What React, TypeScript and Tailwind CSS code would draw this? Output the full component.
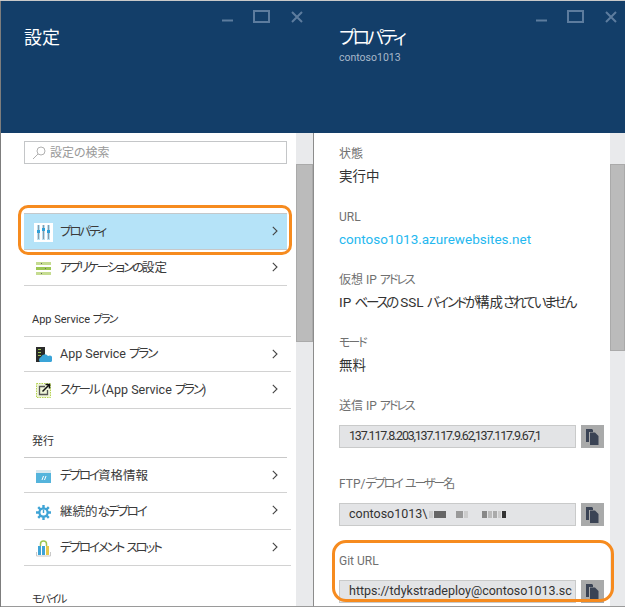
import React from "react";

function T({ s }: { s: string }) {
  const parts = s.split(/([ぁ-んァ-ヶー]+)/);
  return (
    <>
      {parts.map((p, i) =>
        i % 2 === 1 ? (
          <span key={i} className="tracking-[-0.17em]">{p}</span>
        ) : (
          <span key={i}>{p}</span>
        )
      )}
    </>
  );
}

function WinControls() {
  return (
    <div className="flex items-start pt-[9px]">
      <svg width="81" height="16" viewBox="0 0 81 16" fill="none" stroke="#5d7c9e">
        <path d="M0 10.5H11" strokeWidth="2" />
        <rect x="32" y="1" width="15" height="11" strokeWidth="2" />
        <path d="M70 2L80 12M80 2L70 12" strokeWidth="2" />
      </svg>
    </div>
  );
}

function Chevron() {
  return (
    <svg width="6" height="10" viewBox="0 0 6 10" fill="none" stroke="#444" strokeWidth="1.1">
      <path d="M0.8 0.8L5 5L0.8 9.2" />
    </svg>
  );
}

function PropIcon() {
  return (
    <svg width="19" height="19" viewBox="0 0 19 19">
      <rect width="19" height="19" fill="#fff" />
      {[3, 8, 13].map((x, i) => (
        <g key={x}>
          <rect x={x} y="2" width="3" height="15" fill="#b7dff0" />
          <rect x={x + 1} y="2" width="1" height="14" fill="#8a9aa8" />
          <rect x={x} y={[7, 5, 7][i]} width="3" height="3" fill="#2fa0d8" />
        </g>
      ))}
    </svg>
  );
}

function SettingsIcon() {
  return (
    <svg width="15" height="13" viewBox="0 0 15 13">
      <rect y="0" width="15" height="3" fill="#c5dc90" />
      <rect y="5" width="15" height="3" fill="#9cc653" />
      <rect y="10" width="15" height="3" fill="#c5dc90" />
      <rect x="5" y="1" width="1" height="1" fill="#666" />
      <rect x="9" y="6" width="1" height="1" fill="#666" />
      <rect x="5" y="11" width="1" height="1" fill="#666" />
    </svg>
  );
}

function PlanIcon() {
  return (
    <svg width="16" height="16" viewBox="0 0 16 16">
      <rect x="0" y="0" width="9" height="15" fill="#2b2b2b" />
      <rect x="2" y="2" width="3" height="1" fill="#9cc653" />
      <rect x="2" y="5" width="3" height="1" fill="#9cc653" />
      <rect x="2" y="8" width="3" height="1" fill="#9cc653" />
      <path d="M4 15a3 3 0 0 1 1-5 4 4 0 0 1 7-1 3 3 0 0 1 3 6z" fill="#3aa4d8" />
    </svg>
  );
}

function ScaleIcon() {
  return (
    <svg width="15" height="15" viewBox="0 0 15 15" fill="none">
      <rect x="0.5" y="0.5" width="14" height="14" stroke="#b5d34f" strokeDasharray="1.5 1" fill="#eef4d8" />
      <path d="M9 3.5H3.5V11.5H11.5V7" stroke="#555" strokeWidth="1.3" />
      <path d="M6.5 8.5L13 2M9.5 1.5H13.5V5.5" stroke="#111" strokeWidth="1.5" />
    </svg>
  );
}

function CredIcon() {
  return (
    <svg width="15" height="13" viewBox="0 0 15 13">
      <rect width="15" height="13" fill="#55b4dc" />
      <rect x="0" y="0" width="15" height="3" fill="#d8e8ef" />
      <path d="M6 10L7.5 6M8.5 10L10 6" stroke="#fff" strokeWidth="1" />
    </svg>
  );
}

function GearIcon() {
  return (
    <svg width="15" height="15" viewBox="0 0 15 15" fill="none">
      <path d="M7.5 0V15M0 7.5H15M2.2 2.2L12.8 12.8M12.8 2.2L2.2 12.8" stroke="#3fa4d6" strokeWidth="2.4" />
      <circle cx="7.5" cy="7.5" r="5.2" fill="#3fa4d6" />
      <circle cx="7.5" cy="7.5" r="3" fill="#fff" />
      <path d="M7.5 4.5V8" stroke="#3fa4d6" strokeWidth="1.4" />
    </svg>
  );
}

function SlotIcon() {
  return (
    <svg width="15" height="17" viewBox="0 0 15 17" fill="none">
      <path d="M4.5 6V4a3 3 0 0 1 6 0v2" stroke="#9cc653" strokeWidth="1.5" />
      <rect x="2" y="6" width="3" height="9" fill="#3fa4d6" />
      <rect x="6" y="6" width="3" height="9" fill="#3fa4d6" />
      <rect x="10" y="6" width="3" height="9" fill="#e5c84a" />
      <path d="M0.5 12V16H14.5V12" stroke="#c9c9c9" />
    </svg>
  );
}

function CopyIcon() {
  return (
    <div className="w-[23px] h-[23px] bg-[#a9aaaa] flex items-center justify-center shrink-0">
      <svg width="13" height="16" viewBox="0 0 13 16">
        <path d="M0 0H6L7 1V3H3V13H0Z" fill="#3a4354" />
        <path d="M4 3.5H9L12.5 7V16H4Z" fill="#3a4354" />
      </svg>
    </div>
  );
}

function Row({ icon, label, active, wide, h = "h-[35px]", pt = "pt-[1px]" }: { icon: React.ReactNode; label: string; active?: boolean; wide?: boolean; h?: string; pt?: string }) {
  return (
    <div className={`${h} ${pt} flex items-center relative ${active ? "bg-[#b5e3f8] w-[263px] border-t border-[#c4c8ca]" : wide ? "w-[267px]" : "w-[263px]"}`}>
      <div className="w-[36px] flex items-center justify-center pl-[3px] shrink-0">{icon}</div>
      <span className="text-[12.5px] text-[#3a3a3a] flex-1 whitespace-nowrap"><T s={label} /></span>
      <span className="absolute left-[248px] top-[12px]"><Chevron /></span>
    </div>
  );
}

function Divider({ wide, light }: { wide?: boolean; light?: boolean }) {
  return <div className={`h-[1px] ${wide ? "w-[267px]" : "w-[263px]"} ${light ? "bg-[#c8c8c8]" : "bg-[#d2d2d2]"}`} />;
}

function Section({ children }: { children: string }) {
  return <div className="text-[11px] leading-[16px] text-[#333] pl-[8px]"><T s={children} /></div>;
}

function Label({ children }: { children: string }) {
  return <div className="text-[12px] leading-[16px] text-[#707070]"><T s={children} /></div>;
}

function Field({ label, value, link }: { label: string; value: string; link?: boolean }) {
  return (
    <div className="h-[63px]">
      <Label>{label}</Label>
      <div className={`text-[13.5px] leading-[20px] mt-[4px] whitespace-nowrap ${link ? "text-[#25b8ef]" : "text-[#333]"}`}><T s={value} /></div>
    </div>
  );
}

function InputField({ children }: { children: React.ReactNode }) {
  return (
    <div className="flex gap-[5px] mt-[11px]">
      <div className="w-[237px] h-[23px] bg-[#e3e4e6] border border-[#c9caca] pl-[9px] pr-[3px] text-[12.5px] text-[#333] overflow-hidden whitespace-nowrap flex items-center">
        {children}
      </div>
      <CopyIcon />
    </div>
  );
}

function Blur({ w, c }: { w: number; c: string }) {
  return <span className="inline-block h-[7px] shrink-0" style={{ width: w, background: c }} />;
}

export default function App() {
  return (
    <div className="w-[625px] h-[607px] flex overflow-hidden bg-white border-t border-[#c9c9c9] [font-family:'Roboto','Noto_Sans_CJK_JP',sans-serif] [font-feature-settings:'palt']">
      {/* Left blade */}
      <div className="w-[314px] flex flex-col border-l border-[#7d7d7d] shrink-0 relative">
        <div className="h-[132px] bg-[#133e69] flex justify-between pl-[23px] pr-[11px] shrink-0">
          <div className="text-white text-[18px] leading-[24px] pt-[25px]">設定</div>
          <WinControls />
        </div>
        <div className="flex-1 flex min-h-0 border-b border-[#9a9a9a] border-r border-r-[#8c8c8c]">
          <div className="flex-1 pl-[23px] pt-[8px] overflow-hidden">
            <div className="w-[263px] h-[23px] border border-[#c4c6c8] flex items-center pl-[7px] gap-[4px]">
              <svg width="14" height="14" viewBox="0 0 14 14" fill="none" stroke="#b0b0b0" strokeWidth="1">
                <circle cx="9" cy="5" r="4" />
                <path d="M6 8L1 13" />
              </svg>
              <span className="text-[12px] text-[#999]">設定の検索</span>
            </div>
            <div className="mt-[49px]">
              <Row active h="h-[36px]" icon={<PropIcon />} label="プロパティ" />
            </div>
            <Divider light />
            <Row pt="pt-[2px]" icon={<SettingsIcon />} label="アプリケーションの設定" />
            <Divider />
            <div className="mt-[26px] mb-[8px]"><Section>App Service プラン</Section></div>
            <Divider wide />
            <Row wide h="h-[34px]" icon={<PlanIcon />} label="App Service プラン" />
            <Divider wide />
            <Row wide h="h-[36px]" icon={<ScaleIcon />} label="スケール (App Service プラン)" />
            <Divider wide />
            <div className="mt-[25px] mb-[7px]"><Section>発行</Section></div>
            <Divider light />
            <Row pt="pt-[3px]" h="h-[34px]" icon={<CredIcon />} label="デプロイ資格情報" />
            <Divider />
            <Row pt="pt-[3px]" wide h="h-[36px]" icon={<GearIcon />} label="継続的なデプロイ" />
            <Divider wide />
            <Row wide icon={<SlotIcon />} label="デプロイメント スロット" />
            <Divider wide />
            <div className="mt-[26px]"><Section>モバイル</Section></div>
          </div>
          <div className="w-[17px] bg-[#e9eaec] shrink-0 pt-[31px]">
            <div className="h-[178px] bg-[#bbbbbb] border border-[#aaaaaa]" />
          </div>
        </div>
        <div className="absolute left-[17px] top-[204px] w-[274px] h-[50px] border-[3px] border-[#f68b1f] rounded-[10px]" />
      </div>

      {/* Right blade */}
      <div className="flex-1 flex flex-col relative">
        <div className="h-[132px] bg-[#133e69] flex justify-between pl-[25px] pr-[8px] shrink-0">
          <div className="pt-[25px]">
            <div className="text-white text-[18px] leading-[24px]"><T s="プロパティ" /></div>
            <div className="text-[#a8b8ca] text-[10.5px] leading-[14px] mt-[1px]">contoso1013</div>
          </div>
          <WinControls />
        </div>
        <div className="flex-1 flex min-h-0 border-b border-[#9a9a9a]">
          <div className="flex-1 pl-[25px] pt-[13px] overflow-hidden">
            <Field label="状態" value="実行中" />
            <Field label="URL" value="contoso1013.azurewebsites.net" link />
            <Field label="仮想 IP アドレス" value="IP ベースの SSL バインドが構成されていません" />
            <Field label="モード" value="無料" />
            <div className="h-[78px]">
              <Label>送信 IP アドレス</Label>
              <InputField><span className="tracking-[-1.2px]">137.117.8.203,137.117.9.62,137.117.9.67,1</span></InputField>
            </div>
            <div className="h-[77px]">
              <Label>FTP/デプロイ ユーザー名</Label>
              <InputField>
                contoso1013\
                <span className="flex items-center ml-[1px] gap-[1px]">
                  <Blur w={4} c="#ccc" /><Blur w={12} c="#666" /><Blur w={8} c="#fff0" /><Blur w={7} c="#999" /><Blur w={4} c="#ccc" /><Blur w={12} c="#fff0" /><Blur w={5} c="#888" /><Blur w={4} c="#bbb" /><Blur w={4} c="#aaa" /><Blur w={3} c="#ccc" /><Blur w={4} c="#333" />
                </span>
              </InputField>
            </div>
            <Label>Git URL</Label>
            <InputField>https://tdykstradeploy@contoso1013.sc</InputField>
          </div>
          <div className="w-[15px] bg-[#e9eaec] shrink-0 pt-[31px]">
            <div className="h-[187px] bg-[#bbbbbb] border border-[#aaaaaa]" />
          </div>
        </div>
        <div className="absolute left-[18px] top-[539px] w-[282px] h-[62px] border-[3px] border-[#f68b1f] rounded-[14px]" />
      </div>
    </div>
  );
}
